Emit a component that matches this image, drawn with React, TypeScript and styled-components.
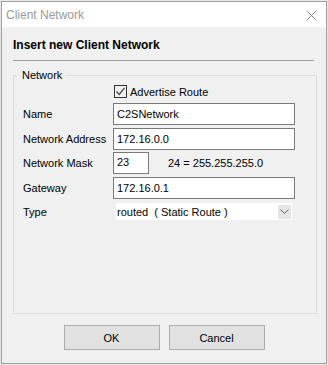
import styled, { createGlobalStyle } from 'styled-components';

const GlobalStyle = createGlobalStyle`
  html, body {
    margin: 0;
    padding: 0;
    background: #e6e6e6;
  }
  body {
    font-family: 'Liberation Sans', Arial, sans-serif;
    font-size: 11px;
    color: #000;
  }
  * {
    box-sizing: border-box;
  }
`;

interface FieldRowProps {
  label: string;
  $top: number;
  children: React.ReactNode;
}

const FieldRow = ({ label, $top, children }: FieldRowProps) => (
  <StyledRow $top={$top}>
    <StyledLabel>{label}</StyledLabel>
    {children}
  </StyledRow>
);

const App = () => {
  return (
    <>
      <GlobalStyle />
      <StyledWindow>
        <StyledTitleBar>
          <StyledTitle>Client Network</StyledTitle>
          <StyledCloseBtn aria-label="close">
            <svg width="11" height="11" viewBox="0 0 11 11">
              <path d="M0.5 0.5 L10.5 10.5 M10.5 0.5 L0.5 10.5" stroke="#8c8c8c" strokeWidth="1" />
            </svg>
          </StyledCloseBtn>
        </StyledTitleBar>

        <StyledBody>
          <StyledHeader>Insert new Client Network</StyledHeader>
          <StyledSeparator />

          <StyledGroup>
            <StyledLegend>Network</StyledLegend>

            <StyledRow $top={8}>
              <StyledSpacer />
              <StyledCheckWrap>
                <StyledCheckBox>
                  <svg width="11" height="11" viewBox="0 0 11 11">
                    <path d="M1.5 5.5 L4.2 8.5 L9.5 1.8" stroke="#4a4a4a" strokeWidth="1.3" fill="none" />
                  </svg>
                </StyledCheckBox>
                <span>Advertise Route</span>
              </StyledCheckWrap>
            </StyledRow>

            <FieldRow label="Name" $top={4}>
              <StyledInput $width={182}>C2SNetwork</StyledInput>
            </FieldRow>
            <FieldRow label="Network Address" $top={3}>
              <StyledInput $width={182}>172.16.0.0</StyledInput>
            </FieldRow>
            <FieldRow label="Network Mask" $top={2}>
              <StyledInput $width={36} $alignTop>23</StyledInput>
              <StyledMaskHint>24 = 255.255.255.0</StyledMaskHint>
            </FieldRow>
            <FieldRow label="Gateway" $top={3}>
              <StyledInput $width={182}>172.16.0.1</StyledInput>
            </FieldRow>
            <FieldRow label="Type" $top={4}>
              <StyledCombo>
                <StyledComboText>routed  ( Static Route )</StyledComboText>
                <StyledComboBtn>
                  <svg width="9" height="5" viewBox="0 0 9 5">
                    <path d="M0.5 0.5 L4.5 4.5 L8.5 0.5" stroke="#606060" strokeWidth="1" fill="none" />
                  </svg>
                </StyledComboBtn>
              </StyledCombo>
            </FieldRow>
          </StyledGroup>

          <StyledButtonBar>
            <StyledButton>OK</StyledButton>
            <StyledButton>Cancel</StyledButton>
          </StyledButtonBar>
        </StyledBody>
      </StyledWindow>
    </>
  );
};

export default App;

const StyledWindow = styled.div`
  margin: 1px 0 0 1px;
  width: 326px;
  height: 363px;
  display: flex;
  flex-direction: column;
  border: 1px solid #a0a0a0;
  background: #f0f0f0;
`;

const StyledTitleBar = styled.div`
  display: flex;
  align-items: center;
  justify-content: space-between;
  height: 25px;
  padding: 0 8px 0 4px;
  background: #fff;
`;

const StyledTitle = styled.div`
  font-size: 12px;
  color: #9a9a9a;
`;

const StyledCloseBtn = styled.div`
  display: flex;
  align-items: center;
  justify-content: center;
  width: 14px;
  height: 14px;
  margin-top: 1px;
`;

const StyledBody = styled.div`
  display: flex;
  flex-direction: column;
  padding: 0 9px 0 11px;
`;

const StyledHeader = styled.div`
  margin-top: 11px;
  font-size: 12px;
  font-weight: bold;
  line-height: 14px;
`;

const StyledSeparator = styled.div`
  margin: 8px 3px 0 0;
  height: 1px;
  background: #a0a0a0;
`;

const StyledGroup = styled.div`
  position: relative;
  display: flex;
  flex-direction: column;
  margin-top: 14px;
  height: 239px;
  padding-left: 9px;
  border: 1px solid #dcdcdc;
`;

const StyledLegend = styled.span`
  position: absolute;
  top: -8px;
  left: 3px;
  padding: 0 4px 0 5px;
  line-height: 14px;
  background: #f0f0f0;
`;

const StyledRow = styled.div<{ $top: number }>`
  display: flex;
  align-items: center;
  margin-top: ${({ $top }) => $top}px;
`;

const StyledLabel = styled.div`
  width: 90px;
  flex-shrink: 0;
`;

const StyledSpacer = styled.div`
  width: 91px;
  flex-shrink: 0;
`;

const StyledCheckWrap = styled.label`
  display: flex;
  align-items: center;
  gap: 3px;
  height: 15px;
`;

const StyledCheckBox = styled.span`
  display: flex;
  align-items: center;
  justify-content: center;
  width: 13px;
  height: 13px;
  border: 1px solid #333;
  background: #f0f0f0;
`;

const StyledInput = styled.div<{ $width: number; $alignTop?: boolean }>`
  display: flex;
  align-items: ${({ $alignTop }) => ($alignTop ? 'flex-start' : 'center')};
  width: ${({ $width }) => $width}px;
  height: 22px;
  padding: ${({ $alignTop }) => ($alignTop ? '3px 3px 0' : '0 3px')};
  border: 1px solid #7a7a7a;
  background: #fff;
`;

const StyledMaskHint = styled.span`
  margin-left: 19px;
`;

const StyledCombo = styled.div`
  display: flex;
  align-items: center;
  justify-content: space-between;
  margin-left: 3px;
  width: 176px;
  height: 17px;
  background: #fff;
`;

const StyledComboText = styled.span`
  padding-left: 1px;
  white-space: pre;
`;

const StyledComboBtn = styled.span`
  display: flex;
  align-items: center;
  justify-content: center;
  width: 13px;
  height: 14px;
  margin-right: 1px;
  background: #e6e6e6;
`;

const StyledButtonBar = styled.div`
  display: flex;
  justify-content: center;
  gap: 9px;
  margin: 11px 0 0 -2px;
`;

const StyledButton = styled.button`
  width: 96px;
  height: 25px;
  padding: 0;
  font-family: 'Liberation Sans', Arial, sans-serif;
  font-size: 11px;
  color: #000;
  border: 1px solid #adadad;
  background: #e1e1e1;
`;
